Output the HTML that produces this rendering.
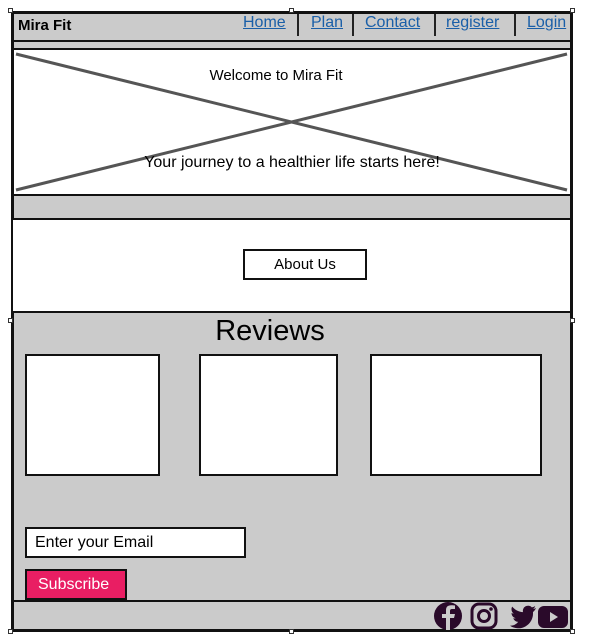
<!DOCTYPE html>
<html><head><meta charset="utf-8"><style>
*{margin:0;padding:0;box-sizing:border-box}
body{width:591px;height:638px;background:#fff;position:relative;overflow:hidden;font-family:"Liberation Sans",sans-serif;color:#000}
.a{position:absolute}
.g{background:#cbcbcb}
.nav a{position:absolute;top:14px;font-size:16px;color:#1a5fa8;text-decoration:underline}
.sep{position:absolute;width:2px;background:#222;top:14px;height:22px}
.box{position:absolute;background:#fff;border:2px solid #111}
.h{position:absolute;width:5px;height:5px;border:1px solid #333;background:#fff}
</style></head><body>
<div class="a g" style="left:11px;top:11px;width:562px;height:621px;border:3px solid #111"></div>
<div class="a" style="left:13px;top:40px;width:558px;height:2px;background:#111"></div>
<div class="a" style="left:18px;top:17px;font-size:15px;font-weight:bold">Mira Fit</div>
<div class="nav">
<a style="left:243px">Home</a>
<a style="left:311px">Plan</a>
<a style="left:365px">Contact</a>
<a style="left:446px">register</a>
<a style="left:527px">Login</a>
</div>
<div class="sep" style="left:297px"></div>
<div class="sep" style="left:352px"></div>
<div class="sep" style="left:434px"></div>
<div class="sep" style="left:514px"></div>
<div class="a" style="left:12px;top:48px;width:560px;height:148px;background:#fff;border:2px solid #111"></div>
<svg class="a" style="left:12px;top:48px" width="560" height="148"><line x1="4" y1="6" x2="555" y2="142" stroke="#555" stroke-width="3"/><line x1="4" y1="142" x2="555" y2="6" stroke="#555" stroke-width="3"/></svg>
<div class="a" style="left:0;width:552px;top:67px;text-align:center;font-size:15px">Welcome to Mira Fit</div>
<div class="a" style="left:12px;width:560px;top:154px;text-align:center;font-size:16px">Your journey to a healthier life starts here!</div>
<div class="a" style="left:11px;top:218px;width:561px;height:95px;background:#fff;border:2px solid #111"></div>
<div class="box" style="left:243px;top:249px;width:124px;height:31px;text-align:center;font-size:15px;line-height:27px">About Us</div>
<div class="a" style="left:0;width:540px;top:315px;text-align:center;font-size:29px">Reviews</div>
<div class="box" style="left:25px;top:354px;width:135px;height:122px"></div>
<div class="box" style="left:199px;top:354px;width:139px;height:122px"></div>
<div class="box" style="left:370px;top:354px;width:172px;height:122px"></div>
<div class="box" style="left:25px;top:527px;width:221px;height:31px;font-size:16px;line-height:27px;padding-left:8px">Enter your Email</div>
<div class="a" style="left:25px;top:569px;width:102px;height:31px;background:#e91e63;border:2px solid #111;color:#fff;font-size:16px;line-height:27px;padding-left:11px">Subscribe</div>
<div class="a" style="left:13px;top:600px;width:558px;height:2px;background:#111"></div>
<svg class="a" style="left:432px;top:602px" width="140" height="28" fill="#2a0a2a">
<circle cx="16" cy="14" r="14"/><path d="M18 28V16h4l1-4h-5V9c0-1.5.6-2 2-2h3V3.5c-1-.2-2-.3-3.5-.3C15.5 3.2 14 5 14 8.2V12h-4v4h4v12z" fill="#cbcbcb"/>
<rect x="40" y="2" width="24" height="24" rx="7" fill="none" stroke="#2a0a2a" stroke-width="3"/><circle cx="52" cy="14" r="5.5" fill="none" stroke="#2a0a2a" stroke-width="3"/><circle cx="59" cy="7" r="1.8"/>
<path d="M104 6c-1 .5-2 .8-3 .9 1-.7 1.9-1.6 2.2-2.8-1 .6-2.1 1-3.3 1.3a5.2 5.2 0 0 0-8.9 4.7c-4.3-.2-8.2-2.3-10.800-5.5-1.4 2.4-.7 5.5 1.6 7-.8 0-1.6-.3-2.3-.6 0 2.5 1.8 4.7 4.2 5.2-.8.2-1.6.2-2.4.1.7 2.1 2.6 3.6 4.9 3.6A10.5 10.5 0 0 1 78 23.8 14.8 14.8 0 0 0 101 10.6V10c1-.7 2.3-2.3 3-4z"/>
<rect x="106" y="4" width="30" height="22" rx="6"/><path d="M118 10v10l8-5z" fill="#cbcbcb"/>
</svg>
<div class="h" style="left:8px;top:8px"></div><div class="h" style="left:289px;top:8px"></div><div class="h" style="left:570px;top:8px"></div>
<div class="h" style="left:8px;top:318px"></div><div class="h" style="left:570px;top:318px"></div>
<div class="h" style="left:8px;top:629px"></div><div class="h" style="left:289px;top:629px"></div><div class="h" style="left:570px;top:629px"></div>
</body></html>
